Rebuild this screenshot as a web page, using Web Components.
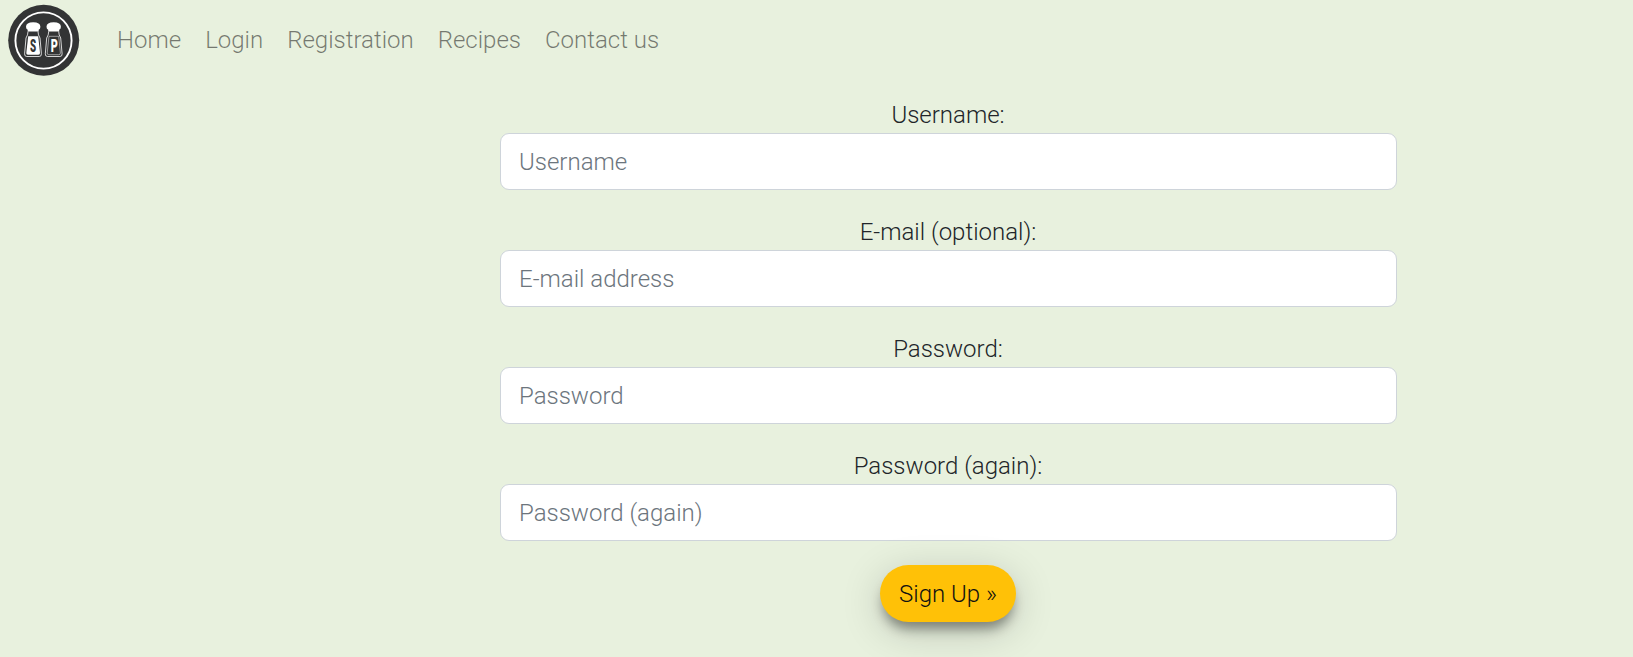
<!DOCTYPE html>
<html lang="en">
<head>
<meta charset="utf-8">
<title>Registration</title>
<style>
body{margin:0;min-height:657px;background:#e8f1de;color:#212529;font:300 24px/36px Roboto,"Liberation Sans",sans-serif;overflow:hidden}
</style>
</head>
<body>
<site-nav>
  <nav-item>Home</nav-item><nav-item>Login</nav-item><nav-item>Registration</nav-item><nav-item>Recipes</nav-item><nav-item>Contact us</nav-item>
</site-nav>
<signup-form>
  <form-field placeholder="Username">Username:</form-field>
  <form-field placeholder="E-mail address">E-mail (optional):</form-field>
  <form-field placeholder="Password" type="password">Password:</form-field>
  <form-field placeholder="Password (again)" type="password">Password (again):</form-field>
  <submit-button>Sign Up »</submit-button>
</signup-form>
<script>
const define = (name, html, setup) => customElements.define(name, class extends HTMLElement {
  constructor() {
    super();
    this.attachShadow({mode: 'open'}).innerHTML = html;
  }
  connectedCallback() { if (setup) setup(this); }
});

define('shaker-logo', `<style>:host{display:block;width:72px;height:72px}svg{display:block}</style>
<svg width="72" height="72" viewBox="0 0 72 72">
  <circle cx="35.7" cy="36.3" r="35.5" fill="#333435"/>
  <circle cx="35.5" cy="36.500" r="28.1" fill="none" stroke="#fff" stroke-width="1.9"/>
  <g transform="translate(0 1.3)">
    <g fill="#fff">
      <path d="M18 21.500q0-4.500 7.200-4.500t7.200 4.500q0 2.300-1.700 3v1.800H19.700v-1.800q-1.700-.7-1.700-3z"/>
      <path d="M38.500 21.500q0-4.500 7.200-4.500t7.200 4.500q0 2.300-1.700 3v1.800H40.200v-1.800q-1.700-.7-1.700-3z"/>
    </g>
    <path d="M20 26.200q0 3.500-2 6.500l-1.400 15.800q-.2 2.700 2.200 2.700h12.400q2.400 0 2.200-2.700L32 32.700q-2-3-2-6.500" fill="none" stroke="#fff" stroke-width=".8"/>
    <path d="M20.200 31h10l1.800 16.700q.1 1.700-1.600 1.700H19.900q-1.700 0-1.600-1.700z" fill="#fff"/>
    <path d="M40.700 26.200q0 3.500-2 6.500l-1.400 15.800q-.2 2.700 2.200 2.700h12.400q2.400 0 2.200-2.700l-1.400-15.800q-2-3-2-6.500" fill="none" stroke="#fff" stroke-width=".8"/>
    <path d="M41 31h9.700l1.700 16.700q.1 1.700-1.600 1.700H40.800q-1.700 0-1.600-1.700z" fill="none" stroke="#fff" stroke-width=".5"/>
  </g>
  <g font-family="Roboto" font-weight="900" font-size="17.500" text-anchor="middle">
    <text transform="translate(25 47.700) scale(.56 1)" fill="#333435">S</text>
    <text transform="translate(46.200 47.700) scale(.62 1)" fill="#fff">P</text>
  </g>
</svg>`);

define('site-nav', `<style>:host{display:flex;align-items:center;height:80px;padding-left:8px;box-sizing:border-box}
nav{display:flex;gap:24px;margin-left:37px}</style><shaker-logo></shaker-logo><nav><slot></slot></nav>`);

define('nav-item', `<style>:host{display:block;color:rgba(0,0,0,.5);white-space:nowrap}</style><slot></slot>`);

define('signup-form', `<style>:host{display:flex;flex-direction:column;align-items:center;gap:24px;width:896px;margin:17px 0 0 500px}</style><slot></slot>`);

define('form-field', `<style>:host{display:block;width:100%;text-align:center}
label{display:block}
input{display:block;box-sizing:border-box;width:calc(100% + 1px);height:57px;margin:0;padding:9px 18px;border:1px solid #ced4da;border-radius:9px;background:#fff;color:#495057;font:inherit}
input::placeholder{color:#6c757d;opacity:1}</style><label for="f"><slot></slot></label><input id="f">`, el => {
  const input = el.shadowRoot.querySelector('input');
  input.placeholder = el.getAttribute('placeholder');
  input.type = el.getAttribute('type') || 'text';
});

define('submit-button', `<style>:host{display:block}
button{display:block;height:57px;margin:0;padding:0 19px;border:0;border-radius:29px;background:#ffc107;font:inherit;color:#111;box-shadow:0 10px 12px -3px rgba(0,0,0,.38),0 9px 40px rgba(0,0,0,.19)}</style><button><slot></slot></button>`);
</script>
</body>
</html>
